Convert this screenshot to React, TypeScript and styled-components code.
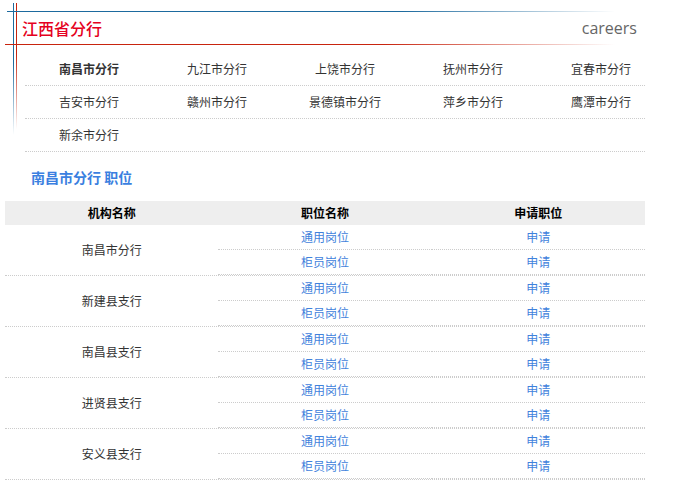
import React from 'react'
import styled, { createGlobalStyle } from 'styled-components'

const GlobalStyle = createGlobalStyle`
  body {
    margin: 0;
    background: #fff;
    font-family: "Noto Sans CJK SC", "Liberation Sans", sans-serif;
    font-size: 12px;
    color: #333;
  }
`

const Page = styled.div`
  width: 677px;
  min-height: 487px;
`

// the two pairs of fading rules in the top left corner are drawn as background layers
const Top = styled.div`
  padding-top: 12px;
  background:
    linear-gradient(to right, #1d6a9e 0%, #1d6a9e 65%, rgba(29, 106, 158, 0) 100%) 7px 11px / 608px 1px no-repeat,
    linear-gradient(to right, #c8240e 0%, #c8240e 62%, rgba(200, 36, 14, 0) 100%) 5px 44px / 610px 1px no-repeat,
    linear-gradient(to bottom, #1d6a9e 0%, #1d6a9e 45%, rgba(29, 106, 158, 0) 100%) 13px 3px / 1px 132px no-repeat,
    linear-gradient(to bottom, #c8240e 0%, #c8240e 40%, rgba(200, 36, 14, 0) 100%) 16px 3px / 1px 126px no-repeat;
`

const Header = styled.div`
  height: 33px;
  display: flex;
  align-items: center;
  justify-content: space-between;
  padding: 0 40px 2px 22px;
  box-sizing: border-box;
`

const Title = styled.h1`
  margin: 0;
  font-size: 16px;
  font-weight: 500;
  color: #e50020;
  line-height: 20px;
`

const Careers = styled.span`
  font-family: "Open Sans", "Liberation Sans", sans-serif;
  font-size: 16px;
  line-height: 20px;
  color: #666;
`

const Menu = styled.div`
  margin: 8px 0 0 25px;
  width: 620px;
`

const MenuRow = styled.div`
  display: flex;
  height: 32px;
  border-bottom: 1px dotted #ccc;
`

const MenuItem = styled.a<{ $active?: boolean }>`
  flex: 0 0 128px;
  display: flex;
  align-items: center;
  justify-content: center;
  padding-bottom: 2px;
  color: #333;
  font-weight: ${p => (p.$active ? 'bold' : 'normal')};
  text-decoration: none;
  white-space: nowrap;
`

const SectionTitle = styled.h2`
  margin: 15px 0 0 31px;
  font-size: 14px;
  line-height: 20px;
  font-weight: bold;
  color: #3b7fe0;
`

const Table = styled.div`
  margin: 14px 0 0 5px;
  width: 640px;
`

const HeadRow = styled.div`
  display: grid;
  grid-template-columns: repeat(3, 1fr);
  height: 24px;
  background: #eee;
`

const HeadCell = styled.div`
  display: flex;
  align-items: center;
  justify-content: center;
  padding-bottom: 1px;
  font-weight: bold;
  color: #000;
`

const OrgRow = styled.div`
  display: grid;
  grid-template-columns: repeat(3, 1fr);
  border-bottom: 1px dotted #ccc;
`

const OrgCell = styled.div`
  display: flex;
  align-items: center;
  justify-content: center;
  padding-bottom: 2px;
  color: #333;
`

const PostList = styled.div`
  display: flex;
  flex-direction: column;
`

const PostItem = styled.a`
  height: 24px;
  box-sizing: border-box;
  height: 25px;
  display: flex;
  align-items: center;
  justify-content: center;
  padding-bottom: 2px;
  border-bottom: 1px dotted #ccc;
  color: #3f82dc;
  text-decoration: none;
`

const cities = [
  ['南昌市分行', '九江市分行', '上饶市分行', '抚州市分行', '宜春市分行'],
  ['吉安市分行', '赣州市分行', '景德镇市分行', '萍乡市分行', '鹰潭市分行'],
  ['新余市分行'],
]

const orgs = ['南昌市分行', '新建县支行', '南昌县支行', '进贤县支行', '安义县支行']
const posts = ['通用岗位', '柜员岗位']

export default function App() {
  return (
    <Page>
      <GlobalStyle />
      <Top>
        <Header>
          <Title>江西省分行</Title>
          <Careers>careers</Careers>
        </Header>
        <Menu>
          {cities.map((row, i) => (
            <MenuRow key={i}>
              {row.map(city => (
                <MenuItem key={city} href="#" $active={city === '南昌市分行'}>
                  {city}
                </MenuItem>
              ))}
            </MenuRow>
          ))}
        </Menu>
      </Top>
      <SectionTitle>南昌市分行 职位</SectionTitle>
      <Table>
        <HeadRow>
          <HeadCell>机构名称</HeadCell>
          <HeadCell>职位名称</HeadCell>
          <HeadCell>申请职位</HeadCell>
        </HeadRow>
        {orgs.map(org => (
          <OrgRow key={org}>
            <OrgCell>{org}</OrgCell>
            <PostList>
              {posts.map(p => (
                <PostItem key={p} href="#">{p}</PostItem>
              ))}
            </PostList>
            <PostList>
              {posts.map(p => (
                <PostItem key={p} href="#">申请</PostItem>
              ))}
            </PostList>
          </OrgRow>
        ))}
      </Table>
    </Page>
  )
}
